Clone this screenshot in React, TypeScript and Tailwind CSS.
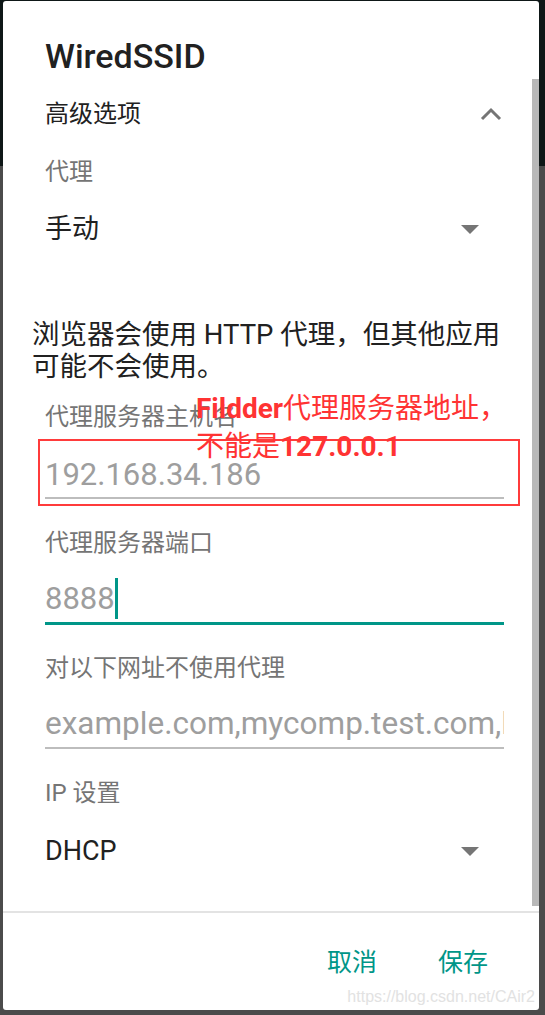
import React from "react";

function ChevronUp() {
  return (
    <svg width="22" height="14" viewBox="0 0 22 14" className="block">
      <polyline points="2,12 11,3 20,12" fill="none" stroke="#757575" strokeWidth="3" />
    </svg>
  );
}

function Caret() {
  return (
    <svg width="18" height="9" viewBox="0 0 18 9" className="block">
      <polygon points="0,0 18,0 9,9" fill="#757575" />
    </svg>
  );
}

export default function App() {
  return (
    <div className="w-[545px] h-[1015px] overflow-hidden bg-[linear-gradient(to_bottom,#0e1717_0px,#0e1717_166px,#4b4b4b_166px)] font-['Roboto','Noto_Sans_CJK_SC',sans-serif]">
      <div className="relative ml-[3px] mt-[1px] w-[536px] h-[1009px] bg-white rounded-[3px] overflow-hidden">
        {/* scrollbar */}
        <div className="absolute right-0 top-[78px] w-[7px] h-[827px] bg-[#b8b8b8]" />

        <div className="flex flex-col pt-[39px]">
          {/* title */}
          <div className="h-[32px] pl-[42px] flex items-center text-[34px] leading-none font-medium text-[#212121]">
            WiredSSID
          </div>

          {/* advanced options */}
          <div className="mt-[22px] h-[40px] pl-[42px] pr-[37px] flex items-center justify-between">
            <span className="text-[24px] leading-none text-[#212121]">高级选项</span>
            <ChevronUp />
          </div>

          {/* proxy label */}
          <div className="mt-[23px] h-[30px] pl-[42px] flex items-center text-[24px] leading-none text-[#757575]">
            代理
          </div>

          {/* proxy select */}
          <div className="mt-[22px] h-[40px] pl-[42px] pr-[60px] flex items-center justify-between">
            <span className="text-[27px] leading-none text-[#212121]">手动</span>
            <Caret />
          </div>

          {/* description */}
          <div className="mt-[70px] pl-[29px] text-[27.5px] leading-[32px] text-[#212121] whitespace-nowrap">
            浏览器会使用 HTTP 代理，但其他应用
            <br />
            可能不会使用。
          </div>

          {/* host label */}
          <div className="mt-[19px] h-[30px] pl-[42px] flex items-center text-[24px] leading-none text-[#757575]">
            代理服务器主机名
          </div>
          {/* host input */}
          <div className="mt-[22px] h-[40px] ml-[42px] mr-[35px] flex items-center text-[31px] leading-none text-[#9e9e9e]">
            192.168.34.186
          </div>
          <div className="mt-[3px] h-[2px] ml-[42px] mr-[35px] bg-[#bdbdbd]" />

          {/* port label */}
          <div className="mt-[29px] h-[30px] pl-[42px] flex items-center text-[24px] leading-none text-[#757575]">
            代理服务器端口
          </div>
          {/* port input */}
          <div className="mt-[20px] h-[40px] ml-[42px] mr-[35px] flex items-center text-[31px] leading-none text-[#9e9e9e]">
            <span>8888</span>
            <span className="w-[3px] h-[41px] bg-[#009688]" />
          </div>
          <div className="mt-[4px] h-[3px] ml-[42px] mr-[35px] bg-[#009688]" />

          {/* bypass label */}
          <div className="mt-[28px] h-[30px] pl-[42px] flex items-center text-[24px] leading-none text-[#757575]">
            对以下网址不使用代理
          </div>
          {/* bypass input */}
          <div className="mt-[21px] h-[40px] ml-[42px] mr-[35px] flex items-center overflow-hidden whitespace-nowrap text-[31.5px] leading-none text-[#9e9e9e]">
            example.com,mycomp.test.com,localhost
          </div>
          <div className="mt-[3px] h-[2px] ml-[42px] mr-[35px] bg-[#bdbdbd]" />

          {/* IP settings */}
          <div className="mt-[29px] h-[30px] pl-[42px] flex items-center text-[24px] leading-none text-[#757575]">
            IP 设置
          </div>
          <div className="mt-[23px] h-[40px] pl-[42px] pr-[60px] flex items-center justify-between">
            <span className="text-[27px] leading-none text-[#212121]">DHCP</span>
            <Caret />
          </div>

          {/* divider */}
          <div className="mt-[40px] h-[2px] bg-[#e3e3e3]" />

          {/* buttons */}
          <div className="mt-[29px] h-[40px] pr-[51px] flex items-center justify-end gap-[61px] text-[25px] leading-none text-[#009688]">
            <span>取消</span>
            <span>保存</span>
          </div>
        </div>

        {/* red annotation box */}
        <div className="absolute left-[35px] top-[438px] w-[482px] h-[67px] border-2 border-[#ff3b3b]" />
        {/* annotation text */}
        <div className="absolute left-[193px] top-[389px] text-[28px] leading-[38px] text-[#ff3333] whitespace-nowrap">
          <div>
            <span className="font-bold">Fildder</span>代理服务器地址，
          </div>
          <div>
            不能是<span className="font-bold">127.0.0.1</span>
          </div>
        </div>

        {/* watermark */}
        <div className="absolute right-[4px] top-[986px] text-[16px] leading-[20px] text-[#e2e2e2] font-['Liberation_Sans',sans-serif]">
          https://blog.csdn.net/CAir2
        </div>
      </div>
    </div>
  );
}
